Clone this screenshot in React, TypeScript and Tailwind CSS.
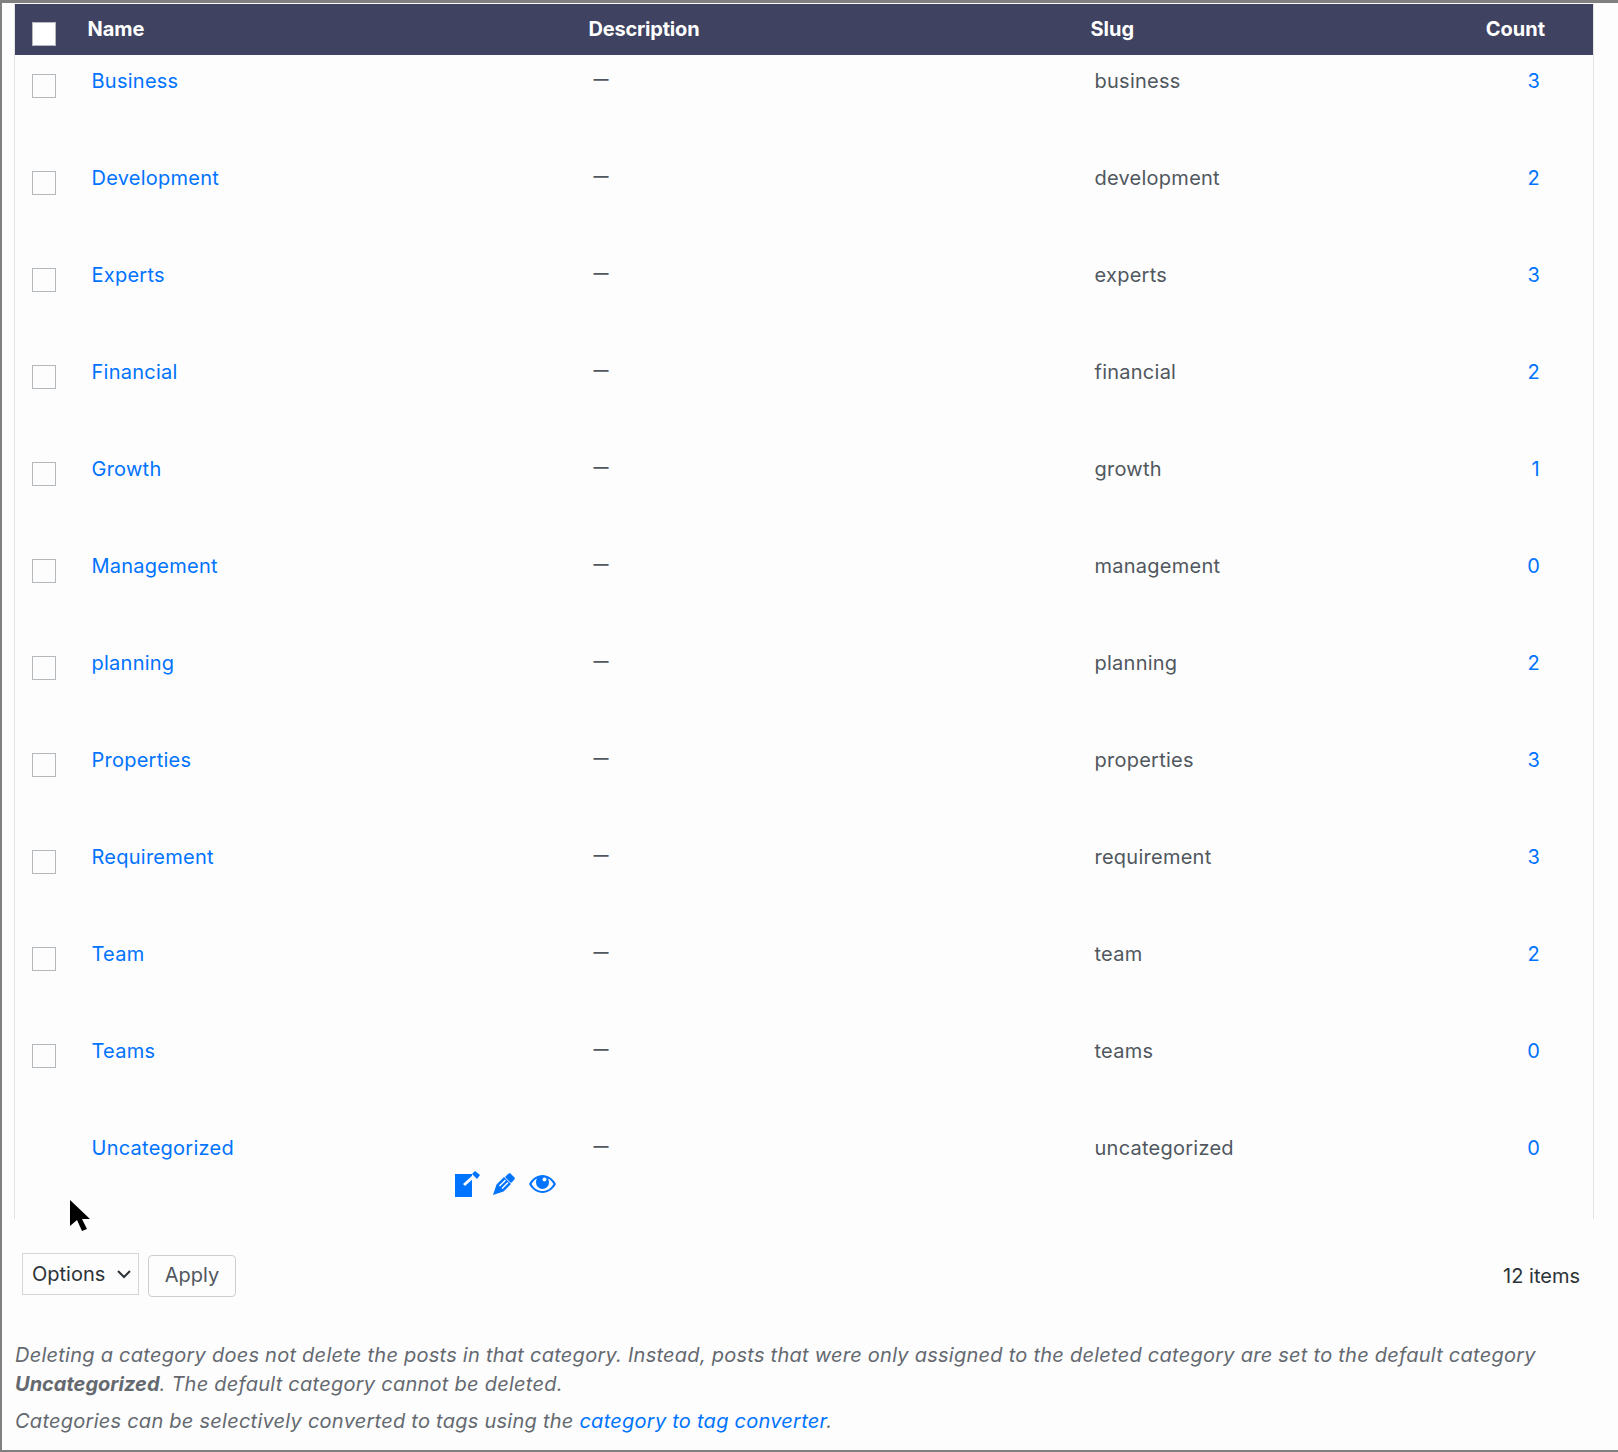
import React from 'react';

const ROWS = [
  { name: 'Business', slug: 'business', count: 3 },
  { name: 'Development', slug: 'development', count: 2 },
  { name: 'Experts', slug: 'experts', count: 3 },
  { name: 'Financial', slug: 'financial', count: 2 },
  { name: 'Growth', slug: 'growth', count: 1 },
  { name: 'Management', slug: 'management', count: 0 },
  { name: 'planning', slug: 'planning', count: 2 },
  { name: 'Properties', slug: 'properties', count: 3 },
  { name: 'Requirement', slug: 'requirement', count: 3 },
  { name: 'Team', slug: 'team', count: 2 },
  { name: 'Teams', slug: 'teams', count: 0 },
  { name: 'Uncategorized', slug: 'uncategorized', count: 0 },
];

const Checkbox: React.FC<{ header?: boolean }> = ({ header }) => (
  <span className={`block w-6 h-6 border border-[#b4b9be] ${header ? 'bg-white' : 'bg-[#fdfdfd]'}`} />
);

const RowActions: React.FC = () => (
  <div className="flex items-center justify-end pr-[29px] mt-[8px] text-[#0073ff]">
    <svg width="25" height="26" viewBox="0 0 25 26" fill="currentColor">
      <rect x="0" y="3" width="17" height="23" />
      <path d="M9 14L19 5" stroke="#fdfdfd" strokeWidth="3" fill="none" />
      <path d="M20 0l5 4-3 4-5-5z" />
    </svg>
    <svg className="ml-[13px]" width="22" height="22" viewBox="0 0 22 22" fill="currentColor">
      <path fillRule="evenodd" d="M15 1l2-1 5 5-1 2-3 3-6-6zM3.500 11.500L11 4l7 7-7.500 7.500L0 22zM6 12.500l1 1 6-6-1-1zM8.500 15l1 1 6-6-1-1z" />
    </svg>
    <svg className="ml-[14px]" width="27" height="18" viewBox="0 0 27 18" fill="currentColor">
      <path fillRule="evenodd" d="M13.500 0C8 0 3 3.500 0 9c3 5.500 8 9 13.500 9S24 14.500 27 9C24 3.500 19 0 13.500 0zM13.500 16C9 16 5 13.500 2.500 9 4 6.500 6 4.500 8.300 3.300 7.500 4.400 7 5.700 7 7.500a6.500 6.500 0 0 0 13 0c0-1.800-.5-3.100-1.300-4.200C21 4.500 23 6.500 24.500 9 22 13.500 18 16 13.500 16z" />
      <circle cx="15.500" cy="4.500" r="2" fill="#fdfdfd" />
    </svg>
  </div>
);

export default function App() {
  return (
    <div className="relative w-[1618px] h-[1452px] bg-[#fdfdfd] border-t-[3px] border-l-2 border-b-2 border-[#808080] font-['Inter',sans-serif] overflow-hidden">
      <div className="pl-[12px] pt-px w-[1592px]">
        <table className="w-full table-fixed border-collapse border-x border-[#e2e2e2]">
          <colgroup>
            <col className="w-[64px]" />
            <col className="w-[506px]" />
            <col className="w-[502px]" />
            <col className="w-[393px]" />
            <col />
          </colgroup>
          <thead>
            <tr className="h-[51px] bg-[#3f4361] text-white text-[20px] text-left">
              <th className="pl-[17px] pt-[8px] align-middle"><Checkbox header /></th>
              <th className="pl-[9px] pb-[2px] font-bold">Name</th>
              <th className="pl-[4px] pb-[2px] font-bold tracking-[-0.2px]">Description</th>
              <th className="pl-[4px] pb-[2px] font-bold">Slug</th>
              <th className="pr-[48px] pb-[2px] font-bold text-right">Count</th>
            </tr>
          </thead>
          <tbody className="text-[20px] text-[#50575e] tracking-[0.25px]">
            {ROWS.map((row, i) => {
              const last = i === ROWS.length - 1;
              return (
                <tr key={row.slug} className="h-[97px] align-top">
                  <td className="pl-[17px] pt-[19px]">{!last && <Checkbox />}</td>
                  <td className="pl-[13px] pt-[11px] leading-[30px] text-[#0073ff]">
                    {row.name}
                    {last && <RowActions />}
                  </td>
                  <td className="pl-[9px] pt-[9px] leading-[30px] text-[15px] font-bold">—</td>
                  <td className="pl-[8px] pt-[11px] leading-[30px]">{row.slug}</td>
                  <td className="pr-[53px] pt-[11px] leading-[30px] text-right text-[#0073ff]">{row.count}</td>
                </tr>
              );
            })}
          </tbody>
        </table>
        <div className="flex items-start justify-between pl-[8px] pr-[14px] pt-[34px]">
          <div className="flex items-start gap-[9px] text-[20px]">
            <div className="flex items-center justify-between w-[117px] h-[42px] pl-[9px] pr-[6px] pb-[1px] border border-[#d5d5d5] text-[#2c3338]">
              <span>Options</span>
              <svg width="16" height="16" viewBox="0 0 16 16" fill="none" stroke="currentColor" strokeWidth="2"><path d="M2 5l6 6 6-6" /></svg>
            </div>
            <button type="button" className="mt-[2px] w-[88px] h-[42px] pb-[2px] border border-[#cfcfcf] rounded-[4px] text-[#50575e]">Apply</button>
          </div>
          <span className="mt-[8px] text-[20px] text-[#2c3338]">12 items</span>
        </div>
        <div className="mt-[44px] pl-px text-[20px] italic text-[#646970] leading-[29px] tracking-[0.25px]">
          <p className="w-[1560px]">Deleting a category does not delete the posts in that category. Instead, posts that were only assigned to the deleted category are set to the default category <strong className="tracking-normal">Uncategorized</strong>. The default category cannot be deleted.</p>
          <p className="mt-[8px]">Categories can be selectively converted to tags using the <span className="text-[#0073ff]">category to tag converter</span>.</p>
        </div>
      </div>
      <svg className="absolute left-[68px] top-[1197px]" width="22" height="32" viewBox="0 0 22 32" fill="#000">
        <path d="M0 0l20 19h-8l5 10-5 2-5-11-7 6z" />
      </svg>
    </div>
  );
}
